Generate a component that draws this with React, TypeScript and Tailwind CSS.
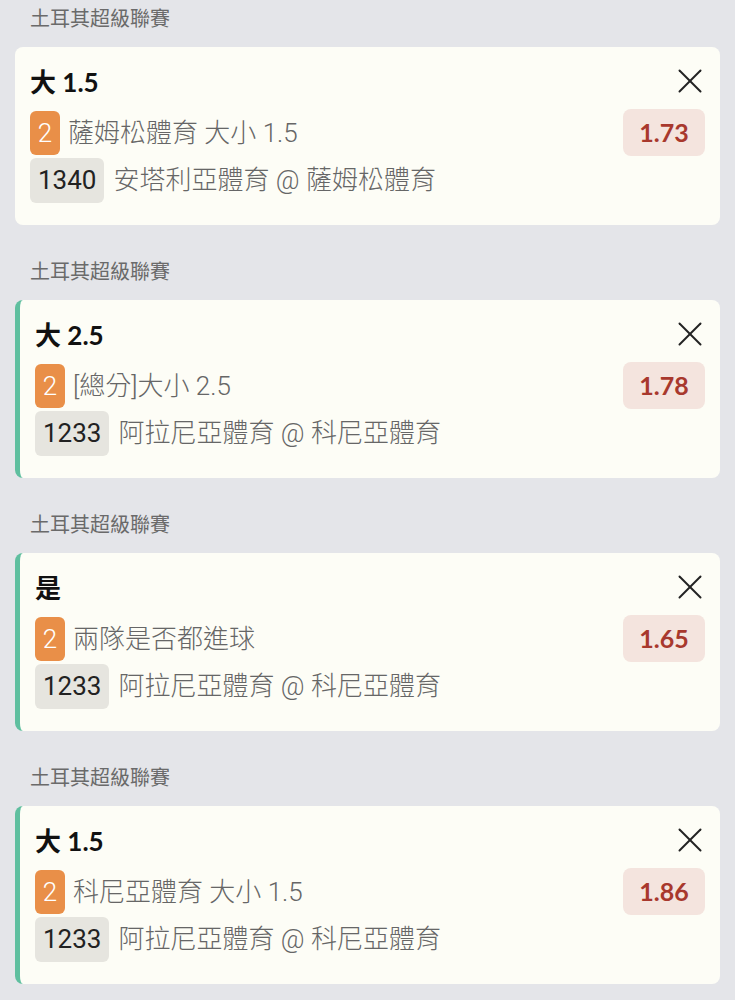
import React from "react";

type Bet = {
  league: string;
  pick: string;
  market: string;
  code: string;
  match: string;
  odds: string;
  accent: boolean;
};

const BETS: Bet[] = [
  { league: "土耳其超級聯賽", pick: "大 1.5", market: "薩姆松體育 大小 1.5", code: "1340", match: "安塔利亞體育 @ 薩姆松體育", odds: "1.73", accent: false },
  { league: "土耳其超級聯賽", pick: "大 2.5", market: "[總分]大小 2.5", code: "1233", match: "阿拉尼亞體育 @ 科尼亞體育", odds: "1.78", accent: true },
  { league: "土耳其超級聯賽", pick: "是", market: "兩隊是否都進球", code: "1233", match: "阿拉尼亞體育 @ 科尼亞體育", odds: "1.65", accent: true },
  { league: "土耳其超級聯賽", pick: "大 1.5", market: "科尼亞體育 大小 1.5", code: "1233", match: "阿拉尼亞體育 @ 科尼亞體育", odds: "1.86", accent: true },
];

const FONT = "font-['Lato','Noto_Sans_CJK_TC',sans-serif]";
const BODY = "font-['Roboto','Noto_Sans_CJK_TC',sans-serif] font-light";

function CloseIcon() {
  return (
    <svg width="24" height="24" viewBox="0 0 24 24" fill="none" stroke="#222" strokeWidth="2" strokeLinecap="round">
      <line x1="1.5" y1="1.5" x2="22.5" y2="22.5" />
      <line x1="22.5" y1="1.5" x2="1.5" y2="22.5" />
    </svg>
  );
}

function BetCard({ bet }: { bet: Bet }) {
  return (
    <div
      className={`flex h-[178px] rounded-lg bg-[#fdfdf6] pl-[15px] pr-[15px] pt-[20px] ${
        bet.accent ? "border-l-[5px] border-[#5fbf9f]" : ""
      }`}
    >
      <div className="flex min-w-0 flex-1 flex-col">
        <div className="h-[30px] text-[26px] font-bold leading-[30px] text-[#111]">{bet.pick}</div>
        <div className={`mt-[14px] flex h-[44px] items-center gap-[8px] ${BODY}`}>
          <span className="flex h-[44px] w-[30px] items-center justify-center rounded-md bg-[#e98f48] text-[26px] text-white">
            2
          </span>
          <span className="text-[26px] text-[#666]">{bet.market}</span>
        </div>
        <div className={`mt-[3px] flex h-[45px] items-center gap-[9px] ${BODY}`}>
          <span className="flex h-[45px] items-center rounded-md bg-[#e6e5df] px-[8px] text-[26px] font-normal text-[#222]">
            {bet.code}
          </span>
          <span className="text-[26px] text-[#666]">{bet.match}</span>
        </div>
      </div>
      <div className="flex flex-col items-end">
        <div className="mr-[3px] mt-[2px]">
          <CloseIcon />
        </div>
        <div className="mt-[16px] flex h-[47px] w-[82px] items-center justify-center rounded-lg bg-[#f4e4de] text-[25px] font-bold text-[#a8382d]">
          {bet.odds}
        </div>
      </div>
    </div>
  );
}

export default function App() {
  return (
    <div className={`min-h-screen bg-[#e4e5e9] px-[15px] pb-[16px] ${FONT}`}>
      {BETS.map((bet, i) => (
        <section key={i} className={i === 0 ? "" : "mt-[28px]"}>
          <div className="h-[47px] pl-[15px]">
            <div className="text-[20px] leading-[36px] text-[#6a6a6a]">{bet.league}</div>
          </div>
          <BetCard bet={bet} />
        </section>
      ))}
    </div>
  );
}
